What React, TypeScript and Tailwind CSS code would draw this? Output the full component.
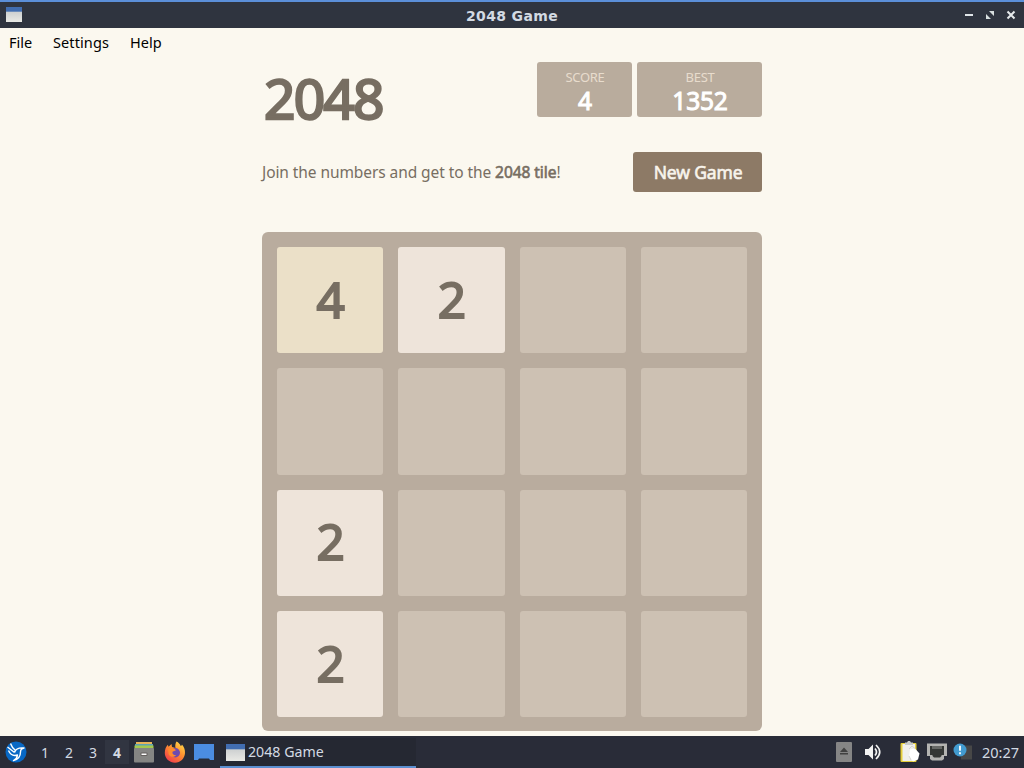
import React, { useState } from "react";

const board = [
  [4, 2, 0, 0],
  [0, 0, 0, 0],
  [2, 0, 0, 0],
  [2, 0, 0, 0],
];

const tileStyles: Record<number, string> = {
  0: "bg-[#cdc1b3]",
  2: "bg-[#eee4da]",
  4: "bg-[#ebe0c8]",
};

function WindowIcon({ className }: { className?: string }) {
  return (
    <svg viewBox="0 0 18 16" className={className} preserveAspectRatio="none">
      <defs>
        <linearGradient id="win" x1="0" y1="0" x2="0" y2="1">
          <stop offset="0" stopColor="#c0c4c7" />
          <stop offset="1" stopColor="#e9e9e5" />
        </linearGradient>
      </defs>
      <rect width="18" height="16" fill="url(#win)" />
      <rect width="18" height="5" fill="#416db0" />
    </svg>
  );
}

function TitleBar() {
  return (
    <header className="h-7 shrink-0 border-t-2 border-[#5b8fd9] bg-[#2f343f] flex items-center select-none">
      <div className="w-[100px] pl-1.5 pb-0.5">
        <WindowIcon className="w-4 h-[15px]" />
      </div>
      <h1 className="flex-1 pt-px text-center font-['DejaVu_Sans',sans-serif] font-bold text-[14px] tracking-[0.35px] leading-none text-[#d3dae3]">
        2048 Game
      </h1>
      <div className="w-[100px] flex justify-end items-center gap-[11px] pr-2">
        <svg viewBox="0 0 10 10" className="w-[10px] h-[10px]">
          <path d="M1 5h8" stroke="#e0e5e8" strokeWidth="2" />
        </svg>
        <svg viewBox="0 0 10 10" className="w-[10px] h-[10px]" fill="#d8dfdf">
          <path d="M4 1h5v5zM1 4v5h5z" />
        </svg>
        <svg viewBox="0 0 10 10" className="w-[10px] h-[10px]">
          <path d="M1.5 1.5l7 7M8.5 1.5l-7 7" stroke="#e6eaec" strokeWidth="2" />
        </svg>
      </div>
    </header>
  );
}

function MenuBar() {
  return (
    <nav className="h-[30px] shrink-0 flex items-center pb-0.5 pl-[9px] gap-5 font-['Noto_Sans',sans-serif] text-[14.5px] leading-none text-black">
      <span className="w-6">File</span>
      <span className="w-[57px] tracking-[0.1px]">Settings</span>
      <span>Help</span>
    </nav>
  );
}

interface ScoreProps {
  label: string;
  value: number;
  className: string;
}

function ScoreBox({ label, value, className }: ScoreProps) {
  return (
    <div className={`h-[55px] rounded-[3px] bg-[#b9ac9d] flex flex-col items-center pl-px ${className}`}>
      <span className="mt-[9px] text-[13px] leading-[13px] tracking-[-0.3px] text-[#e8dccd]">{label}</span>
      <span className="mt-[4px] text-[24.5px] leading-[26px] tracking-[-0.2px] [-webkit-text-stroke:1px_#fff] text-white">
        {value}
      </span>
    </div>
  );
}

function Game() {
  return (
    <main className="w-[500px] mx-auto pt-1 flex-1 font-['Noto_Sans',sans-serif] text-[#776e62]">
      <div className="flex justify-between h-[90px]">
        <h2 className="pt-2 pl-0.5 text-[55px] leading-[56px] tracking-[-1.8px] [-webkit-text-stroke:2.4px_#776e62]">
          2048
        </h2>
        <div className="flex gap-[5px]">
          <ScoreBox label="SCORE" value={4} className="w-[95px]" />
          <ScoreBox label="BEST" value={1352} className="w-[125px]" />
        </div>
      </div>
      <div className="flex justify-between items-center h-10">
        <p className="pt-px text-[15.5px] leading-none tracking-[-0.08px] whitespace-nowrap">
          Join the numbers and get to the{" "}
          <strong className="font-normal tracking-[-0.05px] [-webkit-text-stroke:0.6px_#776e62]">2048 tile</strong>!
        </p>
        <button className="w-[129px] h-10 rounded-[3px] bg-[#8d7a66] pl-px text-[17.5px] tracking-[-0.15px] [-webkit-text-stroke:0.6px_#f8f4ec] text-[#f8f4ec]">
          New Game
        </button>
      </div>
      <div className="mt-[40px] h-[499px] rounded-[6px] bg-[#b9ac9e] p-[15px] grid grid-cols-[repeat(4,106.25px)] auto-rows-[106.25px] gap-[15px]">
        {board.flat().map((value, i) => (
          <div
            key={i}
            className={`rounded-[3px] flex items-center justify-center pl-px pb-px text-[49.5px] leading-none [-webkit-text-stroke:2px_#776e62] ${tileStyles[value]}`}
          >
            {value > 0 && value}
          </div>
        ))}
      </div>
    </main>
  );
}

function BirdIcon() {
  return (
    <svg viewBox="0 0 22 22" className="w-[22px] h-[22px]">
      <circle cx="11" cy="11" r="10.5" fill="#0868c5" />
      <path d="M2.500 6l7 5.500M5.500 2.500c1 3 2.500 5 5 7M9.500 11.500c1-3 4-5 9.500-4.500-2.500.5-3.500 1.500-3.500 4 0 4.500-2.300 7.500-7 8.500 2.500-1.600 3.800-3 4-5.500-3.500 1.200-7 0-9-4.500" fill="none" stroke="#fff" strokeWidth="1.400" strokeLinejoin="round" />
    </svg>
  );
}

function CabinetIcon() {
  return (
    <svg viewBox="0 0 22 22" className="w-[22px] h-[22px]">
      <path d="M3 1h16v3H3z" fill="#e9b458" />
      <path d="M2 3h18v3H2z" fill="#5fa3b3" />
      <path d="M1.500 4.500h19v3h-19z" fill="#a5c84f" />
      <rect x="1" y="7" width="20" height="14.500" rx="1" fill="#858583" />
      <rect x="7.500" y="11.500" width="7" height="3.500" rx="1" fill="#65615f" />
      <rect x="8.500" y="12.500" width="5" height="1.500" fill="#fff" />
    </svg>
  );
}

function FirefoxIcon() {
  return (
    <svg viewBox="0 0 22 22" className="w-[22px] h-[22px]">
      <defs>
        <linearGradient id="fox" x1="0.900" y1="0" x2="0.200" y2="1">
          <stop offset="0" stopColor="#ffe14b" />
          <stop offset="0.450" stopColor="#ff9130" />
          <stop offset="1" stopColor="#f0384c" />
        </linearGradient>
      </defs>
      <path d="M12.500 0.500c2 1 3.500 2.500 4.200 4.500 1-.2 1.200-1 1.200-1.500 2 2.300 3.300 5.200 3.100 8.500-.3 5.500-4.600 9.700-10 9.700S.8 17.500.8 12c0-3.500 1-6 3-8.200l.8 2L7.500 3l.5 3 3.500 1c-.6-2.500 0-5 1-6.500z" fill="url(#fox)" />
      <circle cx="11.300" cy="11.700" r="4.700" fill="#6f4bae" />
      <path d="M4 8.500c2-1.500 4-1.500 6.500-.8l1.500 1.600-3.500 1.500c-.5 2 1 3.500 3.500 3.500-1.500 2.200-5.500 2-7.300-.8z" fill="#ff8a2d" />
    </svg>
  );
}

function TrayIcons() {
  return (
    <div className="flex items-center">
      <svg viewBox="0 0 16 20" className="w-4 h-5">
        <rect width="16" height="20" rx="1" fill="#858585" />
        <path d="M4 10l4-4.500 4 4.500zM4 11h8v1.500H4z" fill="#414141" />
      </svg>
      <svg viewBox="0 0 18 18" className="ml-3 w-[18px] h-[18px]" fill="none">
        <path d="M1 6h3.500L9 1.500v15L4.500 12H1z" fill="#f3f3f3" />
        <path d="M11 5.500q3 3.500 0 7M12 2q7.500 7 0 14" stroke="#f3f3f3" strokeWidth="1.700" />
      </svg>
      <svg viewBox="0 0 20 22" className="ml-[18px] w-5 h-[22px]">
        <rect x="0.500" y="2" width="16" height="19" rx="1" fill="#e6cf3c" />
        <path d="M2.500 3h12.500v17H2.500z" fill="#f0f0ec" />
        <path d="M5 1.500h2L8 0h2l1 1.500h2V4H5z" fill="#c9cbc8" />
        <path d="M10 8.500l5-1 4.500 5-1.500 6-5 2-4-4z" fill="#fff" />
        <path d="M9 8l3-3 3 2.500M9 15l2 4" fill="none" stroke="#d5d5d1" />
      </svg>
      <svg viewBox="0 0 20 18" className="ml-[7px] w-5 h-[18px]">
        <path d="M0 0.500h20V13h-3v3l-2 1.500H5L3 16v-3H0z" fill="#b3b3b1" />
        <path d="M3 3h14v9h-2.500v1L13 14.500H7L5.500 13v-1H3z" fill="#343735" />
        <path d="M6 3v3M8 3v3M10 3v3M12 3v3M14 3v3" stroke="#b3b3b1" strokeWidth="0.800" />
      </svg>
      <svg viewBox="0 0 20 18" className="ml-[6px] w-5 h-[18px]">
        <rect x="8" y="2.500" width="11" height="14" fill="#474747" />
        <circle cx="7" cy="7" r="6.500" fill="#429bd0" />
        <path d="M7 2.800v5M7 9.300v2" stroke="#fff" strokeWidth="1.800" />
      </svg>
    </div>
  );
}

function Taskbar() {
  const [desktop, setDesktop] = useState(4);

  return (
    <footer className="h-8 shrink-0 bg-[#292c38] flex items-center select-none font-['Noto_Sans',sans-serif] text-[#d3dae3]">
      <div className="pl-[5px]">
        <BirdIcon />
      </div>
      <div className="ml-[6px] flex">
        {[1, 2, 3, 4].map((n) => (
          <button
            key={n}
            onClick={() => setDesktop(n)}
            className={`w-6 h-6 pt-0.5 text-[14px] leading-none ${
              n === desktop ? "bg-[#313541] font-bold" : ""
            }`}
          >
            {n}
          </button>
        ))}
      </div>
      <div className="ml-1 flex items-center gap-[9px]">
        <CabinetIcon />
        <FirefoxIcon />
        <svg viewBox="0 0 20 17" className="-ml-px w-5 h-[17px]" fill="#4b8de2">
          <path d="M0 0h20v16h-4l-1-1.500H5L4 16H0z" />
        </svg>
      </div>
      <div className="ml-[6px] w-[196px] h-[30px] mt-auto border-b-2 border-[#5b8fd0] bg-[#252832] flex items-center pl-[6px] gap-[3px]">
        <WindowIcon className="w-[19px] h-[17px]" />
        <span className="text-[14.2px] leading-none">2048 Game</span>
      </div>
      <div className="ml-auto flex items-center">
        <TrayIcons />
        <span className="ml-[9px] w-[42px] text-[14.5px] leading-none">20:27</span>
      </div>
    </footer>
  );
}

export default function App() {
  return (
    <div className="w-[1024px] h-[768px] flex flex-col overflow-hidden bg-[#fbf8ef]">
      <TitleBar />
      <MenuBar />
      <Game />
      <Taskbar />
    </div>
  );
}
